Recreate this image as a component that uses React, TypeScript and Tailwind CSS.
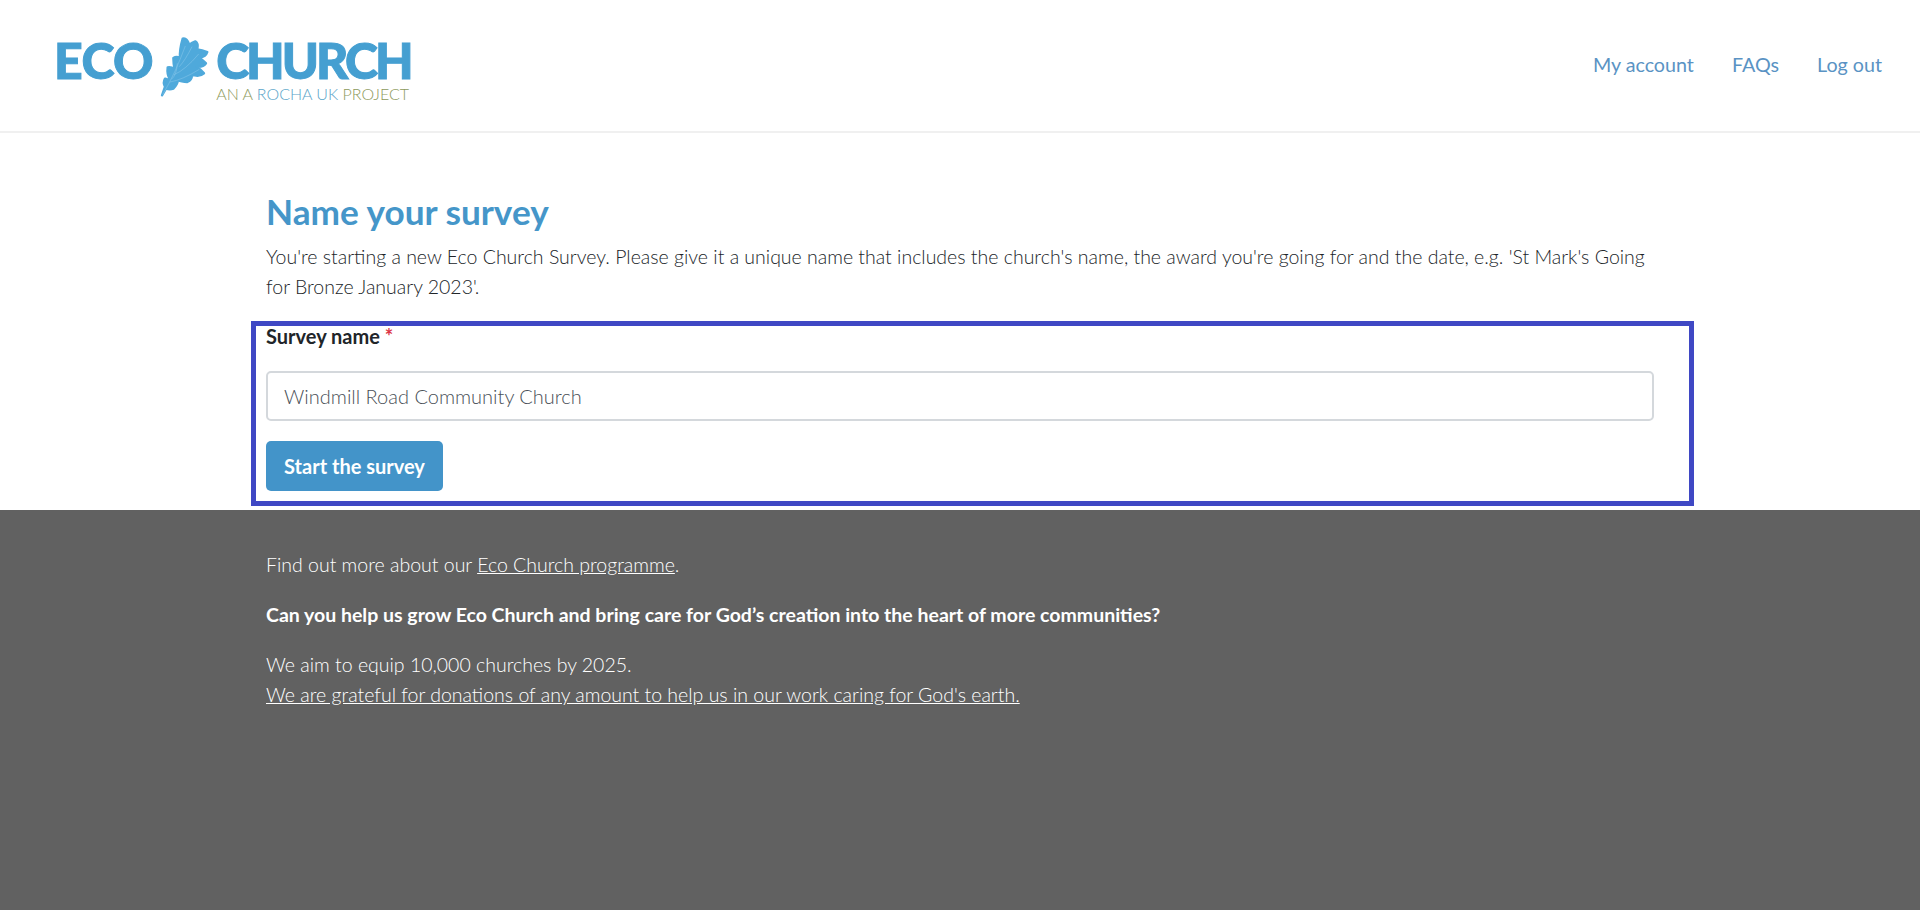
const Leaf = () => (
  <svg viewBox="0 0 270 210" className="w-[90px] h-[70px] shrink-0 -ml-[11px] -mr-[16px] -mt-[5px]">
    <path
      fill="#4fa9db"
      stroke="#4fa9db"
      strokeWidth="7"
      strokeLinejoin="round"
      d="M60 196 L69 170 Q62 158 69 146 Q78 150 84 148 Q74 134 77 112 Q88 110 98 118 Q94 100 94 84 Q104 78 114 84 Q112 60 122 26 Q134 22 142 44 Q150 38 160 34 Q170 40 166 58 Q180 60 196 66 Q192 80 172 84 Q184 90 192 100 Q184 112 164 110 Q176 118 186 130 Q172 142 150 134 Q150 150 136 156 Q118 156 108 150 Q106 164 94 176 Q84 180 72 176 Z"
    />
    <path
      d="M62 194 Q100 130 130 48 M88 148 Q104 136 106 100 M96 134 Q130 120 170 72 M84 156 Q120 150 172 118 M112 110 Q130 90 150 50"
      stroke="#8cc9ea"
      strokeWidth="1.5"
      fill="none"
    />
  </svg>
);

export default function App() {
  return (
    <div className="min-h-[910px] flex flex-col bg-white font-['Lato','Liberation_Sans',sans-serif] text-[20px] text-[#212529]">
      <header className="h-[133px] shrink-0 flex items-center justify-between border-b-2 border-[#f0f0f0] pl-[54px] pr-[38px]">
        <div className="flex items-start h-[80px] -mt-[14px] pt-[16px]">
          <span className="font-black text-[50px] leading-[50px] tracking-[-0.5px] text-[#459fd1] [-webkit-text-stroke:1px_#459fd1] h-[50px] whitespace-nowrap">ECO</span>
          <Leaf />
          <div className="flex flex-col">
            <span className="font-black text-[50px] leading-[50px] tracking-[-3px] text-[#459fd1] [-webkit-text-stroke:1px_#459fd1] h-[50px] whitespace-nowrap">CHURCH</span>
            <span className="text-[16px] leading-[18px] font-light whitespace-nowrap text-[#8d9a5c]">
              AN A <span className="text-[#5aa5c9]">ROCHA UK</span> PROJECT
            </span>
          </div>
        </div>
        <nav className="flex gap-[38px] text-[19.7px] text-[#5a93c4] -mt-[2px]">
          <a>My account</a>
          <a>FAQs</a>
          <a>Log out</a>
        </nav>
      </header>

      <main className="h-[377px] shrink-0 ml-[251px] w-[1443px] pt-[54px]">
        <div className="px-[15px]">
          <h1 className="text-[35.2px] leading-[48px] font-bold text-[#4596c9]">Name your survey</h1>
          <p className="font-light text-[19.5px] leading-[30px] mt-[7px] w-[1400px]">
            You're starting a new Eco Church Survey. Please give it a unique name that includes the church's name, the award you're going for and the date, e.g. 'St Mark's Going for Bronze January 2023'.
          </p>
        </div>
        <form className="mt-[19px] h-[185px] border-[5px] border-[#3f48c4] pl-[10px] pr-[35px]">
          <label className="block font-bold leading-[24px] -mt-[2px]">
            Survey name <span className="text-[#dc3545]">*</span>
          </label>
          <div className="mt-[23px] h-[50px] border-2 border-[#d4d8dc] rounded-[5px] px-[16px] flex items-center font-light text-[#495057]">
            Windmill Road Community Church
          </div>
          <button type="button" className="block mt-[20px] h-[50px] w-[177px] rounded-[5px] bg-[#4394c9] text-white font-bold text-center">
            Start the survey
          </button>
        </form>
      </main>

      <footer className="h-[400px] shrink-0 bg-[#616161] text-white pl-[266px] pt-[40px] text-[19.5px] leading-[30px]">
        <p className="font-light">
          Find out more about our <a className="underline">Eco Church programme</a>.
        </p>
        <p className="font-bold mt-[20px]">Can you help us grow Eco Church and bring care for God’s creation into the heart of more communities?</p>
        <p className="font-light mt-[20px]">We aim to equip 10,000 churches by 2025.</p>
        <p className="font-light"><a className="underline">We are grateful for donations of any amount to help us in our work caring for God's earth.</a></p>
      </footer>
    </div>
  );
}
